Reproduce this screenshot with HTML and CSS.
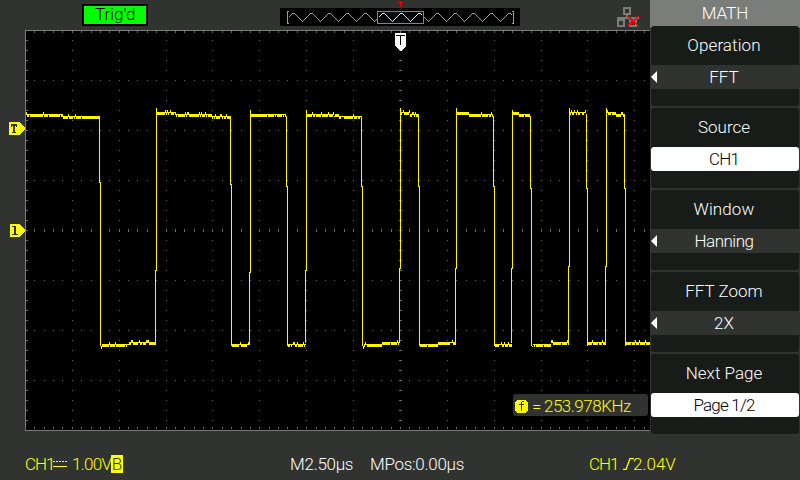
FILE: index.html
```html
<!DOCTYPE html>
<html lang="en">
<head>
<meta charset="utf-8">
<title>Oscilloscope</title>
<link rel="stylesheet" href="styles.css">
</head>
<body>
<main class="scope">
  <header class="topbar">
    <div class="status">Trig'd</div>
    <div class="preview">
      <svg width="240" height="26" viewBox="280 0 240 26" shape-rendering="crispEdges">
        <rect x="280" y="8" width="240" height="18" fill="#000"/>
        <path id="wave-gray" fill="none" stroke="#9c9e9c"/>
        <rect x="377.5" y="11.5" width="46" height="12" fill="#000408" stroke="#848684"/>
        <path id="wave-yellow" fill="none" stroke="#ffff00"/>
        <path d="M289 11.5h-1.500v12h1.500M512 11.500h1.500v12h-1.500" fill="none" stroke="#9c9e9c"/>
        <path d="M398 2h5v1h-2v4h-1v-4h-2z" fill="#f00"/>
      </svg>
    </div>
    <svg class="net" width="24" height="22" viewBox="616 6 24 22" shape-rendering="crispEdges">
      <path fill="#7b7d7b" fill-rule="evenodd" d="M623 7h8v8h-8zM625 9v4h4V9zM626 15h2v2h11v2H617v-2h9zM617 19h8v8h-8zM619 21v4h4v-4zM629 19h8v8h-8zM631 21v4h4v-4z"/>
      <path d="M627 16h2l4 4 4-4h2v1l-4.500 4 4.500 4v1h-2l-4-4-4 4h-2v-1l4.500-4-4.500-4z" fill="#f00"/>
    </svg>
  </header>

  <section class="plotrow">
    <svg class="plot" width="650" height="401" viewBox="0 30 650 401" shape-rendering="crispEdges">
      <rect x="25" y="30" width="625" height="401" fill="#000"/>
      <path id="grid" fill="#6b6d6b"/>
      <path d="M650 30.500H25.500V430.500H650" fill="none" stroke="#7b7d7b"/>
      <path id="edges" fill="none" stroke="#fff300"/>
      <path id="noise" fill="#fff300"/>
      <path d="M395 33h11v13l-5 5h-1l-5-5z" fill="#fff"/>
      <path d="M396 35h9v1h-4v9h-1v-9h-4z" fill="#000"/>
      <path d="M9 122h10l6 6v1l-6 6H9z" fill="#ff0"/>
      <path d="M11 124h6v3h-1v-1h-1v6h1v1h-4v-1h1v-6h-1v1h-1z" fill="#313331"/>
      <path d="M10 224h9l6 6v1l-6 6h-9z" fill="#ff0"/>
      <path d="M13 226h3v8h2v1h-6v-1h2v-7h-2v-1z" fill="#313331"/>
    </svg>
    <div class="freq">
      <svg width="13" height="13" shape-rendering="crispEdges"><path d="M2 0h9v1h1v1h1v9h-1v1h-1v1H2v-1H1v-1H0V2h1V1h1z" fill="#ff0"/><path d="M6 11V5H4V4h2V2h1V1h2v1H7v2h2v1H7v6z" fill="#313331"/></svg>
      <span class="eq">=</span><span class="hz">253.978KHz</span>
    </div>
  </section>

  <footer class="bottombar">
    <div class="ch"><span class="name">CH1</span><svg width="14" height="8" shape-rendering="crispEdges"><path d="M0 1.500h14" stroke="#ff0" stroke-dasharray="2 1"/><path d="M0 6.500h14" stroke="#ff0"/></svg><span class="volt">1.00V</span><span class="bw">B</span></div>
    <div class="time"><span class="m">M</span><span class="base">2.50µs</span></div>
    <div class="pos"><span class="m">M</span><span class="offset">Pos:0.00µs</span></div>
    <div class="trig"><span class="name">CH1</span><svg width="11" height="12" viewBox="0 0 11 12"><path d="M0 11.500h3L7 .500h4" fill="none" stroke="#ff0" stroke-width="1.300"/></svg><span>2.04V</span></div>
  </footer>
</main>

<aside class="menu">
  <h1 class="title">MATH</h1>
  <div class="item"><div class="label wide">Operation</div><div class="value arrow">FFT</div></div>
  <div class="item"><div class="label">Source</div><div class="value on channel">CH1</div></div>
  <div class="item"><div class="label wide">Window</div><div class="value arrow hanning">Hanning</div></div>
  <div class="item"><div class="label">FFT Zoom</div><div class="value arrow">2X</div></div>
  <div class="item"><div class="label">Next Page</div><div class="value on page">Page 1/2</div></div>
</aside>
<script src="scope.js"></script>
</body>
</html>
```
FILE: styles.css
```css
* { box-sizing: border-box; }
body {
  margin: 0;
  width: 800px;
  height: 480px;
  display: flex;
  overflow: hidden;
  background: #313331;
  color: #fff;
  font: 300 17px/20px Roboto, "Liberation Sans", sans-serif;
  white-space: nowrap;
}
svg, span { display: block; flex: none; }
.scope { width: 650px; display: flex; flex-direction: column; }
.topbar { height: 30px; display: flex; align-items: flex-start; padding-left: 82px; }
.status {
  width: 66px;
  height: 22px;
  margin-top: 4px;
  border: 2px solid #000;
  background: #0f0;
  color: #000;
  padding-left: 11px;
  line-height: 17px;
}
.preview { margin-left: 132px; }
.net { margin: 6px 0 0 96px; }
.plotrow { position: relative; height: 401px; }
.freq {
  position: absolute;
  left: 513px;
  top: 364px;
  width: 135px;
  height: 22px;
  border-radius: 3px;
  background: #313331;
  color: #ff0;
  display: flex;
  align-items: center;
  padding: 3px 0 0 2px;
  line-height: 19px;
}
.eq { margin-left: 4px; width: 12px; }
.hz { letter-spacing: -0.5px; }
.bottombar { height: 49px; display: flex; padding: 24px 0 0 25px; line-height: 19px; }
.bottombar > div { display: flex; flex: none; }
.name { letter-spacing: -1px; }
.ch { width: 265px; color: #ff0; }
.ch svg { margin-top: 5px; }
.ch .name { width: 28px; }
.volt { width: 39px; margin-left: 5px; letter-spacing: -0.7px; }
.bw { width: 12px; height: 18px; background: #ff0; color: #313331; text-align: center; }
.time { width: 80px; }
.pos { width: 219px; }
.m { width: 14.5px; }
.base { letter-spacing: -0.3px; }
.offset { letter-spacing: -0.3px; }
.trig { color: #ff0; }
.trig .name { width: 34px; }
.trig svg { margin: 3px -1px 0 0; }

.menu { width: 150px; height: 434px; }
.title {
  height: 28px;
  margin: 0;
  background: #7b7d7b;
  font: inherit;
  line-height: 26px;
  text-align: center;
}
.item {
  height: 80px;
  margin: 0 1px 2px;
  border-radius: 3px;
  background: #181c18;
  text-align: center;
}
.title + .item { margin-top: -2px; position: relative; }
.label { height: 39px; line-height: 39px; padding-right: 2px; }
.wide { letter-spacing: 0.1px; }
.value { height: 24px; line-height: 24px; padding-right: 2px; background: #313331; }
.on { background: #fff; color: #000; border-radius: 3px; }
.channel, .page { letter-spacing: -0.8px; }
.hanning { letter-spacing: -0.5px; }
.arrow { position: relative; }
.arrow::before {
  content: "";
  position: absolute;
  left: 0;
  top: 6px;
  border: 6px solid transparent;
  border-left: 0;
  border-right-color: #fff;
}
```
FILE: scope.js
```js
const set = (id, d) => document.getElementById(id).setAttribute('d', d);

// Acquisition preview
function zigzag(from, to) {
  let d = '';
  for (let x = from; x <= to; x++) {
    const p = (((x - 293) % 18) + 18) % 18;
    const y = 13 + Math.min(p, 18 - p) * 0.95;
    d += (d ? 'L' : 'M') + (x + 0.5) + ' ' + Math.floor(y) + '.5';
  }
  return d;
}
set('wave-gray', zigzag(288, 376) + zigzag(424, 512));
set('wave-yellow', zigzag(378, 422));

// Graticule
let g = '';
const dot = (x, y, w, h) => { g += `M${x} ${y}h${w}v${h}h${-w}z`; };
for (let k = -39; k <= 26; k++) {
  const x = Math.round(400 + 9.375 * k - 0.01);
  if (x < 28) continue;
  dot(x, 31, 1, 2);
  dot(x, 427, 1, 2);
  dot(x, 229, 1, 3);
  for (const y of [80, 130, 180, 280, 330, 380]) dot(x, y, 1, 1);
  if (k % 5 === 0) for (let y = 40; y < 430; y += 10) dot(x, y, 1, 1);
}
for (let y = 40; y < 430; y += 10) {
  dot(26, y, 2, 1);
  dot(399, y, 3, 1);
}
set('grid', g);

// Trace: x of each transition and the height of its one-pixel step
const falls = [[99, 182], [230, 184], [286, 186], [361, 186], [418, 186], [493, 186], [530, 188], [586, 188], [624, 188]];
const rises = [[155, 270], [249, 272], [305, 270], [399, 268], [455, 268], [511, 268], [568, 266], [605, 266]];
let e = '';
falls.forEach(([x, y]) => { e += `M${x + 0.5} 116V${y + 0.5}H${x + 1.5}V346`; });
rises.forEach(([x, y], i) => { e += `M${x + 0.5} 343V${y + 0.5}H${x + 1.5}V${i === 1 || i === 2 || i === 5 ? 110 : 108}`; });
set('edges', e);

let seed = 7;
const rnd = () => (seed = (seed * 16807) % 2147483647) / 2147483647;
let n = '';
function level(from, to, y0, y1) {
  for (let x = from; x <= to; x++) {
    const base = Math.round((y0 + (y1 - y0) * (x - from) / (to - from)) / 2) * 2;
    const r = rnd();
    const up = r < 0.12 ? 2 : 0;
    const down = r > 0.22 ? 2 : 0;
    n += `M${x} ${base - up}h1v${1 + up + down}h-1z`;
  }
}
level(26, 99, 114, 116);
level(157, 230, 112, 116);
level(251, 286, 114, 115);
level(307, 361, 114, 116);
level(401, 418, 112, 114);
level(457, 493, 112, 115);
level(513, 530, 112, 115);
level(570, 586, 112, 113);
level(607, 624, 112, 114);
level(101, 155, 345, 341);
level(232, 249, 344, 343);
level(288, 305, 344, 343);
level(363, 399, 345, 341);
level(420, 455, 345, 341);
level(495, 511, 344, 343);
level(532, 568, 345, 341);
level(588, 605, 342, 342);
level(626, 649, 342, 342);
set('noise', n);
```
